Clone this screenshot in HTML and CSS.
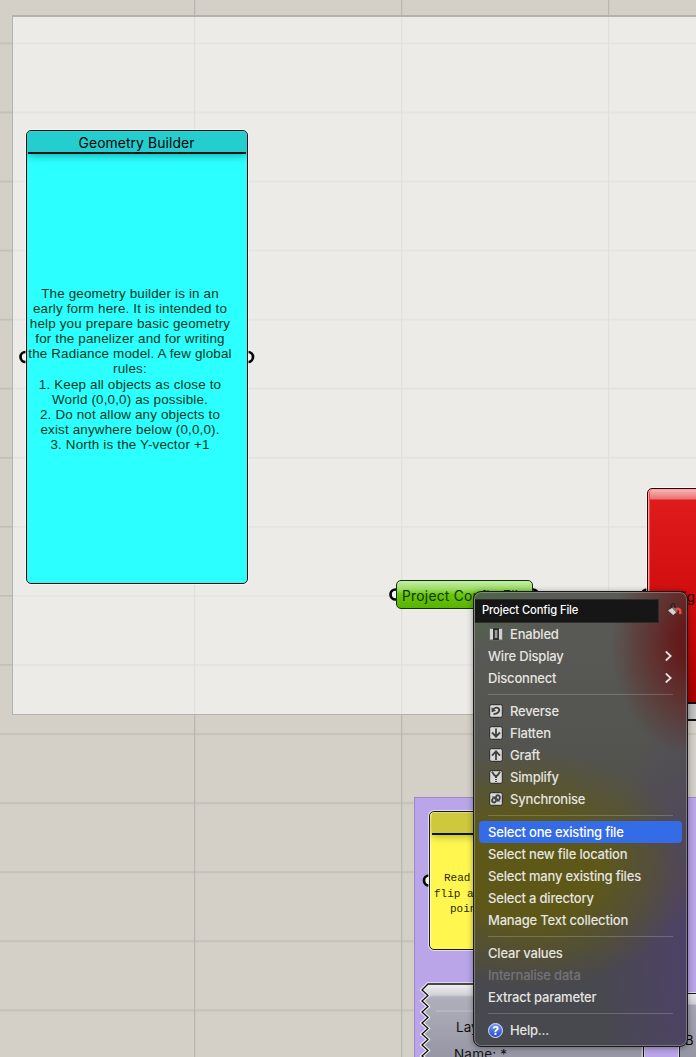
FILE: index.html
```html
<!DOCTYPE html>
<html lang="en">
<head>
<meta charset="utf-8">
<title>Geometry Builder</title>
<link rel="stylesheet" href="styles.css">
</head>
<body>
<main class="canvas">
  <svg class="grid" width="696" height="1057">
    <defs>
      <pattern id="rows" width="696" height="69.07" y="42.5" patternUnits="userSpaceOnUse"><rect width="696" height="1.6" fill="#c2beb7"/></pattern>
      <pattern id="cols" width="207" height="1057" x="194" patternUnits="userSpaceOnUse"><rect width="1.3" height="1057" fill="#bab7b0"/></pattern>
    </defs>
    <rect width="696" height="1057" fill="url(#rows)"/>
    <rect width="696" height="1057" fill="url(#cols)"/>
  </svg>
  <div class="group group-light"></div>
  <div class="group group-violet"></div>

  <svg class="grips" width="696" height="1057" stroke="#080808" stroke-width="2.7">
    <g fill="#f5f5f2">
      <circle cx="25.5" cy="357" r="5"/><circle cx="248" cy="357" r="5"/>
      <circle cx="395.5" cy="594.5" r="5"/><circle cx="533" cy="594.5" r="5"/>
      <circle cx="647" cy="594.5" r="5"/><circle cx="429" cy="880.5" r="5"/>
    </g>
  </svg>

  <section class="node scribble cyan">
    <h1 class="node-title">Geometry Builder</h1>
    <p class="node-body">The geometry builder is in an<br>early form here. It is intended to<br>help you prepare basic geometry<br>for the panelizer and for writing<br>the Radiance model. A few global<br>rules:<br>1. Keep all objects as close to<br>World (0,0,0) as possible.<br>2. Do not allow any objects to<br>exist anywhere below (0,0,0).<br>3. North is the Y-vector +1</p>
  </section>

  <section class="node param">Project Config File</section>
  <section class="node red-node"><span>Config</span></section>
  <div class="node-foot"></div>
  <section class="node scribble yellow">
    <div class="node-title"></div>
    <p class="code"><span>Read</span><span>flip a</span><span>poin</span></p>
  </section>

  <svg class="jagged" width="226" height="76" viewBox="0 0 226 76">
    <defs><linearGradient id="steel" x2="0" y2="1"><stop stop-color="#f0f0f2"/><stop offset=".14" stop-color="#d2d1d8"/><stop offset=".17" stop-color="#b0afbc"/><stop offset=".9" stop-color="#9897a5"/></linearGradient></defs>
    <path d="M224.5 80V3H9L3 9l6 5.4-6 5.5 6 5.5-6 5.5 6 5.5-6 5.5 6 5.5-6 5.5 6 5.5-6 5.5 6 5.5-6 5.5 6 5.5" fill="url(#steel)" stroke="#eee" stroke-width="3.5"/>
    <path d="M224.5 80V3H9L3 9l6 5.4-6 5.5 6 5.5-6 5.5 6 5.5-6 5.5 6 5.5-6 5.5 6 5.5-6 5.5 6 5.5-6 5.5 6 5.5" fill="none" stroke="#111" stroke-width="1.3"/>
    <path d="M17 30H222" stroke="#c2c1cb"/>
  </svg>
  <div class="jagged-text"><span>Layer</span><span class="name">Name: *</span></div>
  <section class="node steel-node">B</section>

  <nav class="menu">
    <header class="menu-head">
      <div class="menu-name">Project Config File</div>
      <svg class="bucket" width="18" height="18" viewBox="0 0 18 18">
        <path d="M5.2 8V4.4a1.8 1.8 0 0 1 3.6 0V8" fill="none" stroke="#2b2524" stroke-width="1.3"/>
        <path d="M9.5 8.2Q14.3 6.8 14.3 10.5V13" fill="none" stroke="#e94b3b" stroke-width="2.6"/>
        <path d="M2.2 9.6L7.6 6L12 10L7.2 14Z" fill="#77716f"/>
        <path d="M2.2 9.6L6 7L10 11.6L7.2 14Z" fill="#d6d3d1"/>
      </svg>
    </header>
    <ul>
      <li><svg class="switch" width="16" height="16" viewBox="0 0 16 16"><rect x="1" y="1.5" width="14" height="13" rx="1" fill="#6b6b69"/><rect x="2" y="3" width="3" height="10.5" fill="#d5d5d5"/><rect x="11" y="3" width="3" height="10.5" fill="#d0d0d0"/><rect x="5" y="2" width="6" height="12" fill="#30302f"/><rect x="6.8" y="4" width="2.6" height="8" fill="#9a9a9a"/></svg>Enabled</li>
      <li>Wire Display<svg class="chevron" width="7" height="10"><path d="M1.3 1L5.7 5L1.3 9"/></svg></li>
      <li>Disconnect<svg class="chevron" width="7" height="10"><path d="M1.3 1L5.7 5L1.3 9"/></svg></li>
      <li class="line"></li>
      <li><svg class="icon" viewBox="0 0 14 14"><rect x=".7" y=".7" width="12.6" height="12.6" rx="1.6"/><path d="M4.5 5Q7 2.6 9.6 4.2Q11.3 6.4 8.8 8.8Q7.4 10 4.5 10.2"/><path class="solid" d="M2.5 3.3L2.7 8.2L7 6.8Z"/></svg>Reverse</li>
      <li><svg class="icon" viewBox="0 0 14 14"><rect x=".7" y=".7" width="12.6" height="12.6" rx="1.6"/><path d="M7 2.5V10M3 6.5L7 10.6L11 6.5"/></svg>Flatten</li>
      <li><svg class="icon" viewBox="0 0 14 14"><rect x=".7" y=".7" width="12.6" height="12.6" rx="1.6"/><path d="M7 12V4M3 7.7L7 3.4L11 7.7"/></svg>Graft</li>
      <li><svg class="icon" viewBox="0 0 14 14"><rect x=".7" y=".7" width="12.6" height="12.6" rx="1.6"/><path d="M3 1.8L5.6 5.6H8.4L11 1.8M7 5.5V8"/><path d="M7 7V13" stroke-dasharray="1 1"/></svg>Simplify</li>
      <li><svg class="icon" viewBox="0 0 14 14"><rect x=".7" y=".7" width="12.6" height="12.6" rx="1.6"/><path d="M4.2 6Q2.4 8 3.6 10Q6.2 11.4 7 9V5Q7.8 2.6 10 3.5Q11.8 5.5 10 8"/><path class="solid" d="M2.7 4.5H6.3V8ZM8 6V9.6H11.5Z"/></svg>Synchronise</li>
      <li class="line"></li>
      <li class="active">Select one existing file</li>
      <li>Select new file location</li>
      <li>Select many existing files</li>
      <li>Select a directory</li>
      <li>Manage Text collection</li>
      <li class="line"></li>
      <li>Clear values</li>
      <li class="muted">Internalise data</li>
      <li>Extract parameter</li>
      <li class="line"></li>
      <li><span class="help-icon">?</span>Help...</li>
    </ul>
  </nav>
</main>
</body>
</html>
```
FILE: styles.css
```css
* { box-sizing: border-box; }
body { margin: 0; }
.canvas { position: relative; width: 696px; height: 1057px; overflow: hidden; background: #d4d0c8; font-family: "Liberation Sans", Arial, sans-serif; }
.grid, .grips { position: absolute; inset: 0; }
.group { position: absolute; }
.group-light { left: 12px; top: 15px; width: 700px; height: 700px; background: rgba(255,255,255,.57); border: 1px solid #b3b2ad; border-top: 2px solid #b3b2ad; }
.group-violet { left: 414px; top: 797px; width: 300px; height: 280px; background: #b9a5e8; border: 1px solid #9b88c5; }
.node { position: absolute; border: 1.5px solid #171b1a; border-radius: 5px; }
.scribble { overflow: hidden; display: flex; flex-direction: column; }
.cyan { left: 26px; top: 130px; width: 222px; height: 454px; background: #2cffff; box-shadow: inset 0 0 0 1px #77dada, inset 0 2px #c8fffa, 0 0 0 1px rgba(255,255,255,.5); }
.node-title { flex: none; height: 22px; margin: 1px 1px 0; border-bottom: 2px solid #061716; }
.cyan .node-title { background: #24cdce; color: #000; font: 400 13.8px/22px Inter, sans-serif; letter-spacing: .13px; text-align: center; padding-right: 1px; box-shadow: 0 1px 10px #159f9f; }
.node-body { margin: 132px 0 0; padding-right: 14px; display: block; text-align: center; font-size: 13.4px; line-height: 15.1px; letter-spacing: .17px; color: #06391b; white-space: nowrap; }
.param { left: 396px; top: 580px; width: 137px; height: 29px; padding-left: 5px; background: linear-gradient(#c6edaa 0, #9bdd65 30%, #68c40d 50%, #58b400); border-color: #0b330d; font: 400 13.8px/30px Inter, sans-serif; letter-spacing: .25px; white-space: nowrap; color: #103600; }
.red-node { left: 647px; top: 488px; width: 80px; height: 215px; background: linear-gradient(#f8b8b8 0, #e87373 10px, #df1b1b 11px, #d20d0d 110px, #a60000); border-color: #390000; box-shadow: inset 1px 1px #f3a5a5, inset 2px 0 #e85050, 0 0 0 1px rgba(255,255,255,.6); color: #310000; font: 400 14px/16px Inter, sans-serif; }
.red-node span { position: absolute; left: 3px; top: 100px; }
.node-foot { position: absolute; left: 670px; top: 702px; width: 40px; height: 19px; background: linear-gradient(90deg,#777,#bbb 18px,#ddd); border: 2px solid #111; }
.yellow { left: 429px; top: 811px; width: 150px; height: 139px; background: #fff750; box-shadow: inset 1px 2px #fffbc0, 0 0 0 1px rgba(255,255,255,.6); }
.yellow .node-title { height: 22px; margin-left: 2px; background: #cec83d; box-shadow: 0 1px 8px #aaa42c; }
.code { display: flex; flex-direction: column; align-items: flex-start; margin: 36px 0 0 4px; font: 11px/15.5px "Liberation Mono", monospace; color: #292800; white-space: pre; }
.code span:first-child { margin-left: 10px; }
.code span:last-child { margin-left: 16px; }
.jagged { position: absolute; left: 419px; top: 981px; }
.jagged-text { position: absolute; left: 456px; top: 1018px; display: flex; flex-direction: column; gap: 9px; font: 400 13.5px/18px Inter, sans-serif; color: #111; }
.jagged-text .name { margin-left: -2px; letter-spacing: .2px; }
.steel-node { left: 679px; top: 993px; width: 60px; height: 90px; padding: 37px 0 0 5px; background: linear-gradient(#e8e7ed 0, #d0cfd7 10px, #a5a4b2 11px, #8f8e9c); font: 400 13px/18px Inter, sans-serif; box-shadow: 0 0 0 1px #ddd; }
.menu { position: absolute; left: 473px; top: 591px; width: 215px; height: 456px; padding-top: 7px; border: 1px solid #191919; border-radius: 8px; box-shadow: inset 0 0 0 1px rgba(255,255,255,.26), 0 1px 6px rgba(0,0,0,.38); color: #e6e5e1; font: 500 13px/22px Inter, sans-serif; letter-spacing: -.19px; background: radial-gradient(ellipse 85px 115px at 222px 50px, #641a1a 20%, rgba(101,26,26,0)), radial-gradient(ellipse 72px 55px at 2px 5px, #4f6546, rgba(76,93,67,0)), radial-gradient(ellipse 165px 120px at 55px 278px, #5e5818 40%, rgba(94,86,22,0)), radial-gradient(ellipse 100px 260px at 225px 360px, rgba(78,66,104,.95) 15%, rgba(79,65,108,0)), linear-gradient(#5a5b57, #51514c 48%, #484750 76%, #48494f); }
.menu-head { display: flex; height: 24px; }
.menu-name { width: 184px; height: 24px; padding-left: 7px; margin-left: 1px; background: #161616; border: 1px solid #2d2d2b; border-left: 0; color: #fff; font-size: 11.2px; line-height: 21px; letter-spacing: -.1px; }
.bucket { margin: 2px 0 0 7px; }
ul { margin: 0; padding: 0; list-style: none; }
li { height: 22px; padding: 0 14px; display: flex; align-items: center; white-space: nowrap; }
.line { height: 11px; }
.line::before { content: ""; width: 100%; height: 1px; background: rgba(255,255,255,.19); }
.switch { margin-right: 6px; }
.icon { width: 14px; height: 14px; flex: none; margin: 0 7px 0 1px; fill: none; stroke: #3f3f3f; stroke-width: 1.8; }
.icon rect { fill: #d9d9d8; stroke: #292929; stroke-width: 1; }
.icon .solid { fill: #3f3f3f; stroke: none; }
.chevron { margin-left: auto; margin-right: 1px; fill: none; stroke: #e6e5e3; stroke-width: 1.7; stroke-linecap: round; }
.active { margin: 0 5px; padding: 0 9px; border-radius: 4px; color: #fff; background: #346be6; }
.muted { color: #74737a; }
.help-icon { width: 15px; height: 15px; margin-right: 7px; border: 1px solid #d9e1ff; border-radius: 50%; background: linear-gradient(#7896ef,#244dc8); color: #fff; font-size: 12px; font-weight: 700; line-height: 13px; text-align: center; }
```
